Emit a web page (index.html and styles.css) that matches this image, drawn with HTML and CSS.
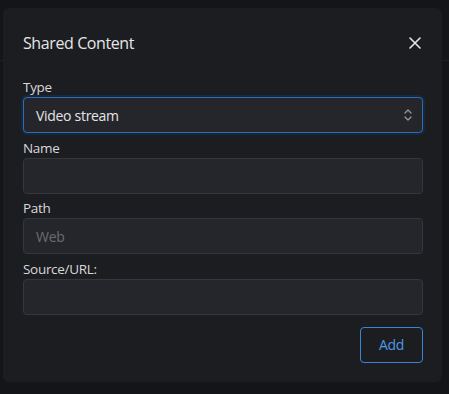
FILE: index.html
```html
<!DOCTYPE html>
<html>
<head>
<meta charset="utf-8">
<link rel="stylesheet" href="styles.css">
</head>
<body>
<div class="backdrop-line"></div>
<div class="modal">
  <div class="modal-header">
    <h2 class="title">Shared Content</h2>
    <button class="close" aria-label="Close">
      <svg width="12" height="12" viewBox="0 0 12 12"><path d="M1 1L11 11M11 1L1 11" stroke="#e6e6e6" stroke-width="1.6" stroke-linecap="round"/></svg>
    </button>
  </div>
  <form class="form">
    <div class="field">
      <label class="label">Type</label>
      <div class="select">
        <span>Video stream</span>
        <svg class="chev" width="10" height="14" viewBox="0 0 10 14"><path d="M2 5L5 2L8 5M2 9L5 12L8 9" fill="none" stroke="#9a9ba0" stroke-width="1.2" stroke-linecap="round" stroke-linejoin="round"/></svg>
      </div>
    </div>
    <div class="field">
      <label class="label">Name</label>
      <div class="input"></div>
    </div>
    <div class="field">
      <label class="label">Path</label>
      <div class="input placeholder">Web</div>
    </div>
    <div class="field">
      <label class="label">Source/URL:</label>
      <div class="input"></div>
    </div>
    <div class="actions">
      <button type="button" class="btn-add">Add</button>
    </div>
  </form>
</div>
</body>
</html>
```
FILE: styles.css
```css
* { box-sizing: border-box; }
html, body { margin: 0; padding: 0; }
body {
  width: 449px;
  height: 394px;
  background: #141518;
  font-family: "Open Sans", "Noto Sans", sans-serif;
  color: #e4e4e6;
  position: relative;
  overflow: hidden;
}
.backdrop-line {
  position: absolute;
  left: 0; right: 0; top: 60px;
  height: 1px;
  background: #1f2024;
}
.modal {
  position: relative;
  margin: 8px 0 0 3px;
  width: 439px;
  height: 374px;
  background: #1c1d21;
  border-radius: 6px;
  padding: 23px 19px 19px 20px;
  display: flex;
  flex-direction: column;
}
.modal-header {
  display: flex;
  align-items: center;
  justify-content: space-between;
  height: 24px;
}
.title {
  margin: 0;
  font-size: 16px;
  font-weight: 400;
  line-height: 24px;
  color: #e6e6e8;
  letter-spacing: -0.4px;
}
.close {
  background: none;
  border: none;
  padding: 0;
  margin-right: 2px;
  width: 12px;
  height: 12px;
  display: flex;
}
.form {
  margin-top: 22px;
  display: flex;
  flex-direction: column;
  gap: 4.5px;
}
.field {
  display: flex;
  flex-direction: column;
}
.label {
  font-size: 13.5px;
  line-height: 20px;
  color: #d8d8da;
  letter-spacing: -0.3px;
}
.select, .input {
  height: 36px;
  border-radius: 4px;
  background: #25262b;
  border: 1px solid #36373c;
  display: flex;
  align-items: center;
  padding: 0 12px;
  font-size: 14px;
  letter-spacing: -0.3px;
}
.select {
  border-color: #2e6cb0;
  box-shadow: 0 0 0 2px #16283d;
  justify-content: space-between;
  color: #e4e4e6;
  padding-right: 9px;
}
.placeholder { color: #6b6c71; }
.actions {
  display: flex;
  justify-content: flex-end;
  margin-top: 7.5px;
}
.btn-add {
  width: 63px;
  height: 36px;
  background: transparent;
  border: 1px solid #3a86d4;
  border-radius: 4px;
  color: #4c9be6;
  font-family: "Open Sans", "Noto Sans", sans-serif;
  font-size: 14px;
  letter-spacing: -0.3px;
}
```
